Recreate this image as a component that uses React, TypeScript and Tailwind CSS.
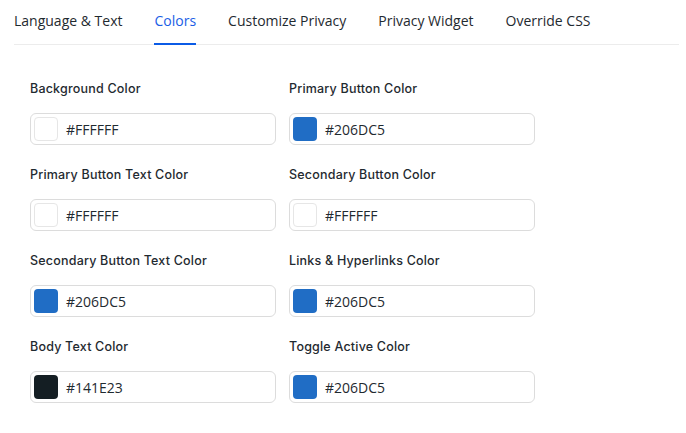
import React from 'react';

const tabs = ['Language & Text', 'Colors', 'Customize Privacy', 'Privacy Widget', 'Override CSS'];

const fields = [
    { label: 'Background Color', value: '#FFFFFF' },
    { label: 'Primary Button Color', value: '#206DC5' },
    { label: 'Primary Button Text Color', value: '#FFFFFF' },
    { label: 'Secondary Button Color', value: '#FFFFFF' },
    { label: 'Secondary Button Text Color', value: '#206DC5' },
    { label: 'Links & Hyperlinks Color', value: '#206DC5' },
    { label: 'Body Text Color', value: '#141E23' },
    { label: 'Toggle Active Color', value: '#206DC5' },
];

function ColorField({ label, value }: { label: string; value: string }) {
    const isWhite = value === '#FFFFFF';
    return (
        <div className="flex flex-col">
            <label className="text-[12.5px] font-medium tracking-[0.2px] text-[#1f2a30] leading-5 font-['Inter',sans-serif]">{label}</label>
            <div className="mt-[14px] h-8 w-[246px] rounded-md border border-[#dcdcdc] flex items-center pl-[3px] gap-2">
                <div
                    className={`w-6 h-6 rounded ${isWhite ? 'border border-[#e6e6e6]' : ''}`}
                    style={{ backgroundColor: value }}
                />
                <span className="text-[14px] text-[#1f2a30] font-['Open_Sans',sans-serif]">{value}</span>
            </div>
        </div>
    );
}

export default function App() {
    return (
        <div className="w-[686px] h-[433px] bg-white pl-[14px] pr-[7px] font-['Open_Sans',sans-serif]">
            <div className="flex gap-8 border-b border-[#ececec] h-[45px] items-start">
                {tabs.map((t) => (
                    <div
                        key={t}
                        className={`pt-[11px] h-[45px] text-[14px] leading-5 ${t === 'Colors' ? 'text-[#1a5ee6] border-b-2 border-[#0b5be6]' : 'text-[#1f2a30]'}`}
                    >
                        {t}
                    </div>
                ))}
            </div>
            <div className="pl-4 pt-[34px] grid grid-cols-[246px_246px] gap-x-[13px] gap-y-[20px]">
                {fields.map((f) => (
                    <ColorField key={f.label} {...f} />
                ))}
            </div>
        </div>
    );
}
